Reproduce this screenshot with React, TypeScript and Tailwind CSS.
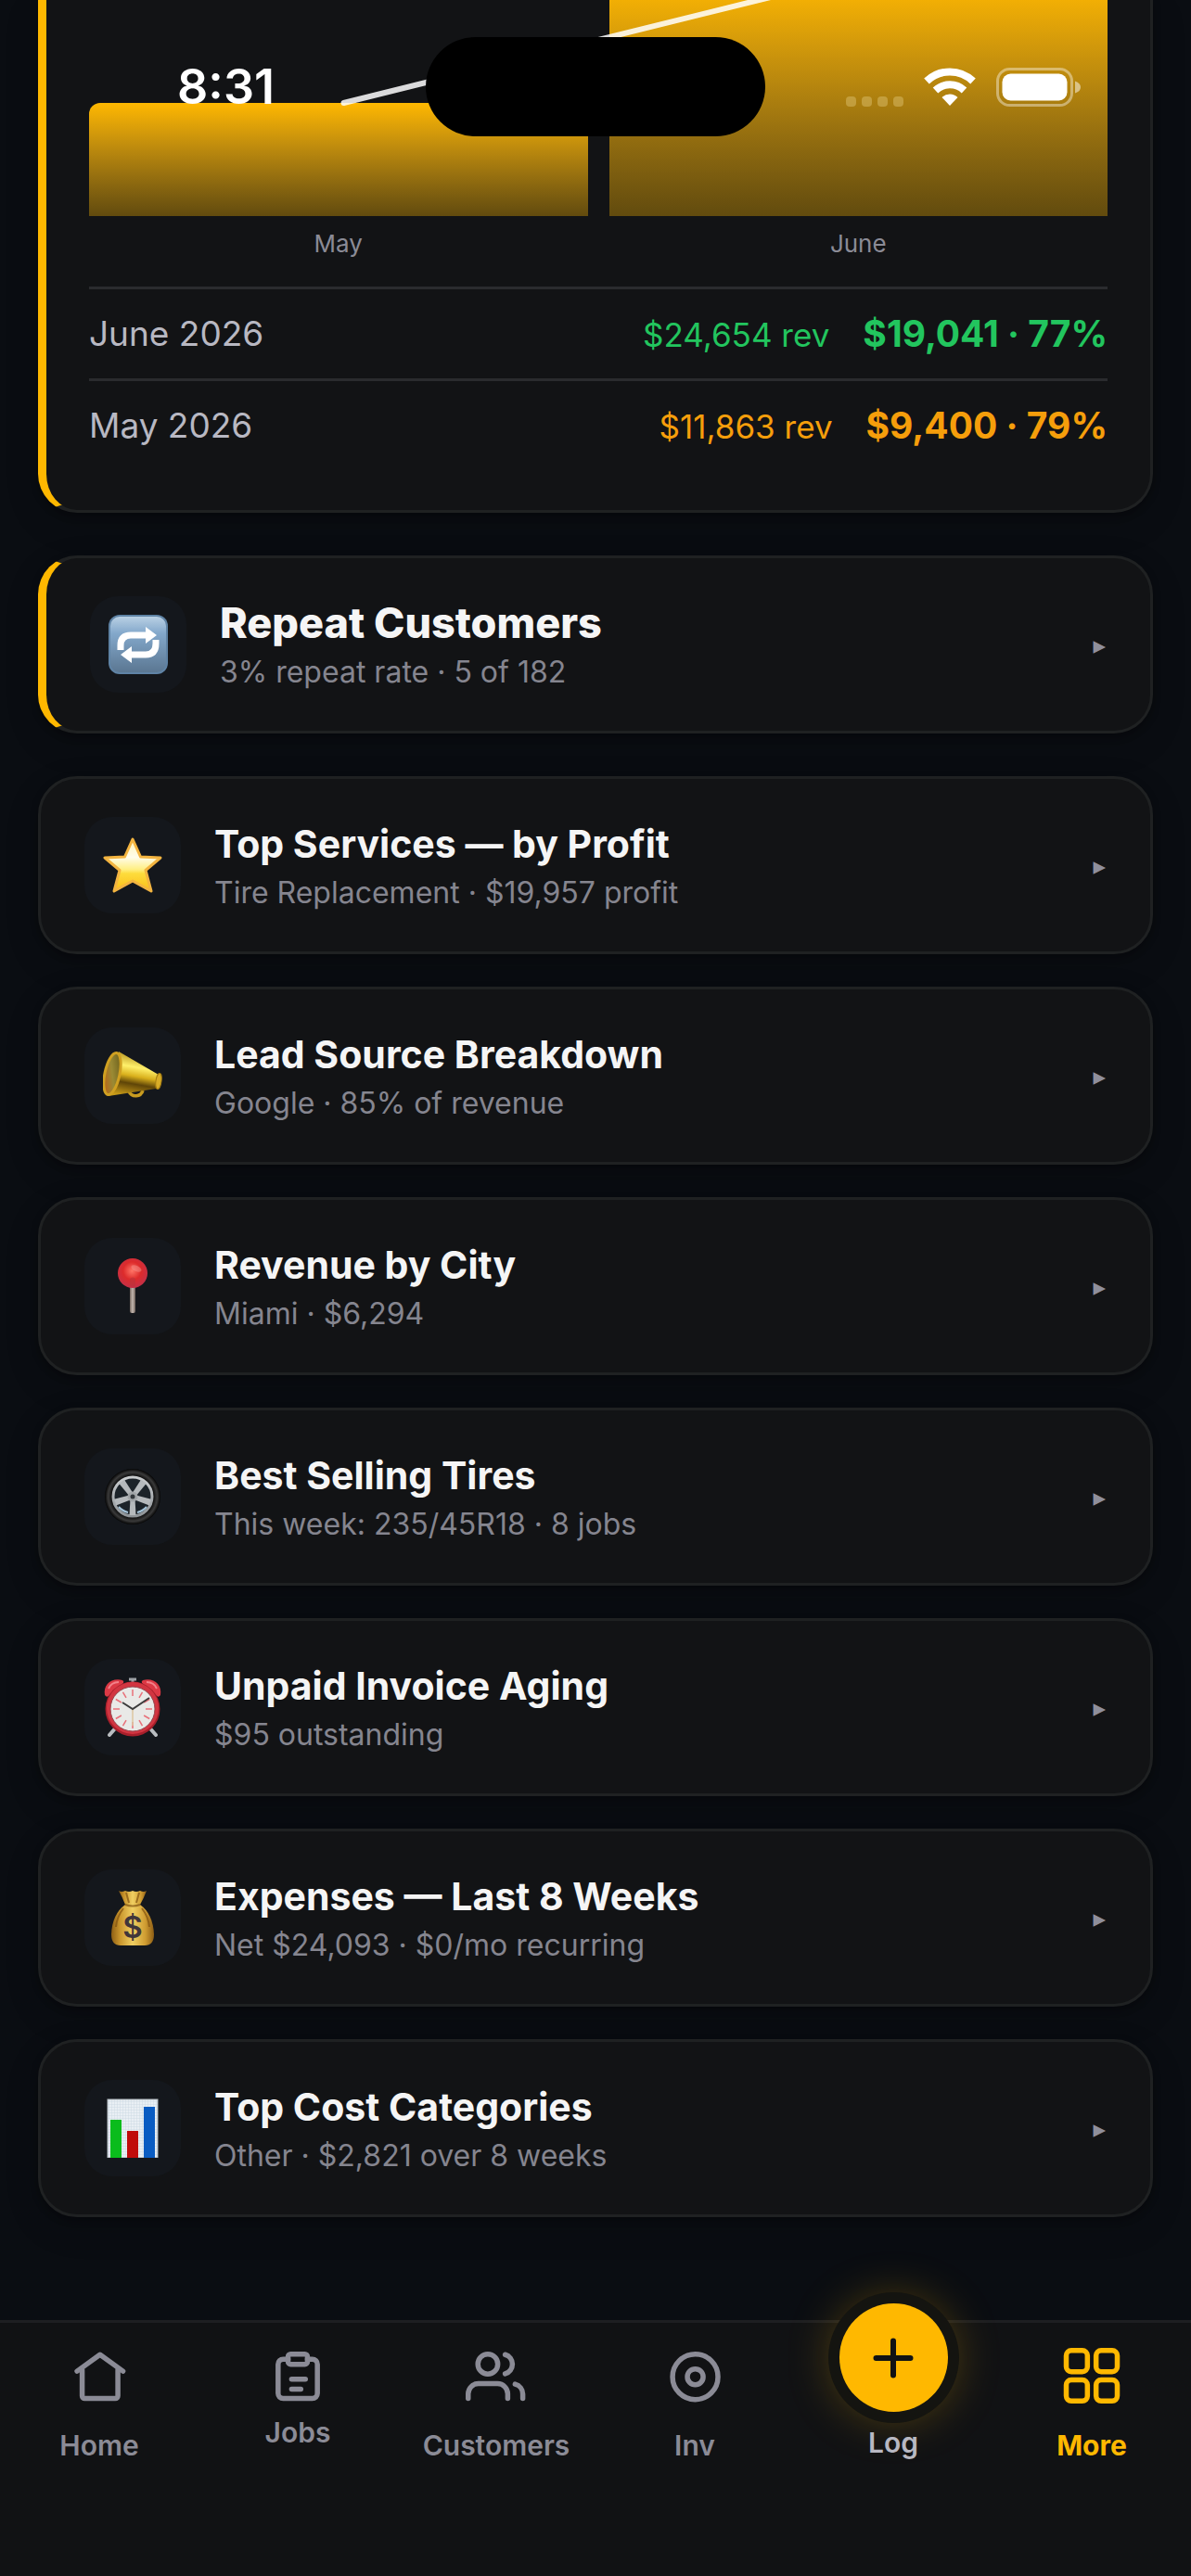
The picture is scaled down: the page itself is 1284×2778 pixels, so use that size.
import type { ReactNode } from "react";

type InsightCard = {
  title: string;
  subtitle: string;
  icon: ReactNode;
};

type NavItem = {
  label: string;
  icon: ReactNode;
  compact?: boolean;
  active?: boolean;
};

function RepeatIcon() {
  return (
    <svg viewBox="0 0 64 64" className="size-16" aria-hidden>
      <defs>
        <linearGradient id="repeat-bg" x1="0" y1="0" x2="0" y2="1">
          <stop offset="0" stopColor="#b9d0e4" />
          <stop offset="0.3" stopColor="#83a8cb" />
          <stop offset="1" stopColor="#5b7792" />
        </linearGradient>
      </defs>
      <rect width="64" height="64" rx="12" fill="#5f83a5" />
      <rect x="2" y="2" width="60" height="60" rx="10" fill="url(#repeat-bg)" />
      <path d="M13 38V33Q13 22 24 22H41" fill="none" stroke="#fff" strokeWidth="7" />
      <path d="M51 27V31Q51 43 40 43H24" fill="none" stroke="#fff" strokeWidth="7" />
      <path d="M40 13 52 22 40 31ZM25 34 13 43 25 52Z" fill="#fff" />
    </svg>
  );
}

function StarIcon() {
  return (
    <svg viewBox="0 0 64 64" className="size-16" aria-hidden>
      <defs>
        <linearGradient id="star-fill" x1="0" y1="0" x2="0" y2="1">
          <stop offset="0" stopColor="#fff3b8" />
          <stop offset="0.35" stopColor="#fffcea" />
          <stop offset="0.58" stopColor="#ffef83" />
          <stop offset="0.66" stopColor="#fddc3c" />
          <stop offset="1" stopColor="#fbbd18" />
        </linearGradient>
      </defs>
      <path
        d="M32 4 40.500 23 62 24 46 37.500 52 60 32 49 12 60 18 37.500 2 24 23.500 23Z"
        fill="url(#star-fill)"
        stroke="#f3b440"
        strokeWidth="3"
        strokeLinejoin="round"
      />
    </svg>
  );
}

function MegaphoneIcon() {
  return (
    <svg viewBox="0 0 64 64" className="size-16" aria-hidden>
      <defs>
        <linearGradient id="horn-fill" x1="0.6" y1="0" x2="0.4" y2="1">
          <stop offset="0" stopColor="#a8800f" />
          <stop offset="0.35" stopColor="#fff06a" />
          <stop offset="0.55" stopColor="#d9b01c" />
          <stop offset="0.72" stopColor="#5f4508" />
          <stop offset="1" stopColor="#c79a17" />
        </linearGradient>
        <linearGradient id="horn-mouth" x1="0" y1="1" x2="1" y2="0">
          <stop offset="0" stopColor="#c4550d" />
          <stop offset="0.5" stopColor="#9a8a34" />
          <stop offset="1" stopColor="#5f5315" />
        </linearGradient>
      </defs>
      <path d="M28 49a8 8 0 0 0 15-1" fill="none" stroke="#c99c20" strokeWidth="3.5" />
      <path d="M17 6 60 31Q61 39 57 46L6 54Z" fill="url(#horn-fill)" />
      <ellipse cx="60" cy="38" rx="3" ry="8.500" transform="rotate(8 60 38)" fill="#d9ad27" stroke="#a47c12" />
      <ellipse cx="10" cy="30" rx="8" ry="23" transform="rotate(12 10 30)" fill="url(#horn-mouth)" stroke="#d0a021" strokeWidth="3" />
    </svg>
  );
}

function PinIcon() {
  return (
    <svg viewBox="0 0 64 64" className="size-16" aria-hidden>
      <defs>
        <radialGradient id="pin-head" cx="0.48" cy="0.42" r="0.6">
          <stop offset="0" stopColor="#ff7466" />
          <stop offset="0.5" stopColor="#dd2b2b" />
          <stop offset="1" stopColor="#c2304a" />
        </radialGradient>
        <linearGradient id="pin-stem" x1="0" x2="1">
          <stop offset="0" stopColor="#75675f" />
          <stop offset="0.5" stopColor="#c4b8b0" />
          <stop offset="1" stopColor="#6a5c55" />
        </linearGradient>
      </defs>
      <rect x="29" y="28" width="6" height="33" rx="2" fill="url(#pin-stem)" />
      <circle cx="32" cy="18" r="16" fill="url(#pin-head)" />
      <ellipse cx="36" cy="13" rx="6" ry="3" transform="rotate(25 36 13)" fill="#f79a92" opacity="0.45" />
      <path d="M29 24q3-3 6 0v7q-3 3-6 0Z" fill="#b9333c" opacity="0.6" />
    </svg>
  );
}

function TireIcon() {
  return (
    <svg viewBox="0 0 64 64" className="size-16" aria-hidden>
      <defs>
        <radialGradient id="tire-rubber" cx="0.5" cy="0.5" r="0.5">
          <stop offset="0.75" stopColor="#0e0e0e" />
          <stop offset="0.88" stopColor="#3a3a3a" />
          <stop offset="1" stopColor="#040404" />
        </radialGradient>
        <linearGradient id="tire-rim" x1="0" y1="0" x2="0" y2="1">
          <stop offset="0" stopColor="#c9ccce" />
          <stop offset="1" stopColor="#8f9498" />
        </linearGradient>
      </defs>
      <circle cx="32" cy="32" r="30" fill="url(#tire-rubber)" />
      <circle cx="32" cy="32" r="21" fill="#1c2329" stroke="url(#tire-rim)" strokeWidth="3" />
      {[36, 108, 180, 252, 324].map((angle) => (
        <path
          key={angle}
          d="M29.500 30 28.500 12h7L34.500 30Z"
          transform={`rotate(${angle} 32 32)`}
          fill="#b5b9bc"
        />
      ))}
      <path d="M17 43a18.500 18.500 0 0 0 10 6M47 43a18.500 18.500 0 0 1-10 6" fill="none" stroke="#a5c3d8" strokeWidth="2" />
      <circle cx="32" cy="32" r="5.500" fill="#a1a5a8" />
      <circle cx="32" cy="32" r="2.500" fill="#33383c" />
    </svg>
  );
}

function AlarmIcon() {
  return (
    <svg viewBox="0 0 64 64" className="size-16" aria-hidden>
      <path d="M14 54 7 62M50 54l7 8" stroke="#b9bdc1" strokeWidth="4" strokeLinecap="round" />
      <path d="M28 2h8M32 2v5" stroke="#9da2a6" strokeWidth="3" />
      <path d="M2 19C0 8 9 0 21 3q2 1 1 3L6 20q-2 2-4-1Z" fill="#dc3945" />
      <path d="M62 19C64 8 55 0 43 3q-2 1-1 3l16 14q2 2 4-1Z" fill="#dc3945" />
      <path d="M6 12Q9 5 17 5M47 5q8 0 11 7" fill="none" stroke="#f2828a" strokeWidth="2" />
      <circle cx="32" cy="34" r="29.500" fill="#a81f2b" />
      <circle cx="32" cy="33" r="28" fill="#d23541" />
      <circle cx="32" cy="34" r="24" fill="#e9e9e7" stroke="#94424a" />
      {[0, 30, 60, 90, 120, 150, 180, 210, 240, 270, 300, 330].map((angle) => (
        <path key={angle} d="M32 13v7" transform={`rotate(${angle} 32 34)`} stroke="#e8707a" strokeWidth="1.5" />
      ))}
      <path d="M32 34v18" stroke="#dcc6a0" strokeWidth="1.5" />
      <path d="M21 27 32 34 50 22" fill="none" stroke="#3c3c3c" strokeWidth="2" />
    </svg>
  );
}

function MoneyBagIcon() {
  return (
    <svg viewBox="0 0 64 64" className="size-16" aria-hidden>
      <defs>
        <linearGradient id="bag-fill" x1="0" x2="1">
          <stop offset="0" stopColor="#8f5f14" />
          <stop offset="0.2" stopColor="#c9952c" />
          <stop offset="0.5" stopColor="#f0cf62" />
          <stop offset="0.8" stopColor="#cf9c31" />
          <stop offset="1" stopColor="#8d5d15" />
        </linearGradient>
      </defs>
      <path d="M17 3q3 2 7 0 4 2 8 0 4 2 8 0 4 2 7 0-3 8-7 15H24Q21 10 17 3Z" fill="url(#bag-fill)" />
      <path d="M24 18h16q14 10 15 32 0 12-10 12H19Q9 62 9 50 10 28 24 18Z" fill="url(#bag-fill)" />
      <path d="M24 18q8 3 16 0M25 5l3 11M39 5l-3 11M22 22q-7 9-8 20M42 22q7 9 8 20" fill="none" stroke="#80510f" strokeWidth="2" opacity="0.7" />
      <text x="32" y="54" textAnchor="middle" fontSize="33" fontWeight="600" fill="#40363a">
        $
      </text>
    </svg>
  );
}

function BarsIcon() {
  return (
    <svg viewBox="0 0 64 64" className="size-16" aria-hidden>
      <defs>
        <pattern id="graph-paper" width="3" height="3" patternUnits="userSpaceOnUse">
          <rect width="3" height="3" fill="#e9eff4" />
          <path d="M0 0H3M0 0V3" stroke="#c9d7e2" strokeWidth="0.8" />
        </pattern>
      </defs>
      <rect x="5" y="1" width="54" height="63" fill="url(#graph-paper)" stroke="#b0b7bd" />
      <rect x="8" y="23" width="12" height="41" fill="#0abc1c" />
      <rect x="26" y="35" width="12" height="29" fill="#c00b0b" />
      <rect x="44" y="9" width="12" height="55" fill="#0a5cc2" />
    </svg>
  );
}

const INSIGHT_CARDS: InsightCard[] = [
  { title: "Top Services — by Profit", subtitle: "Tire Replacement · $19,957 profit", icon: <StarIcon /> },
  { title: "Lead Source Breakdown", subtitle: "Google · 85% of revenue", icon: <MegaphoneIcon /> },
  { title: "Revenue by City", subtitle: "Miami · $6,294", icon: <PinIcon /> },
  { title: "Best Selling Tires", subtitle: "This week: 235/45R18 · 8 jobs", icon: <TireIcon /> },
  { title: "Unpaid Invoice Aging", subtitle: "$95 outstanding", icon: <AlarmIcon /> },
  { title: "Expenses — Last 8 Weeks", subtitle: "Net $24,093 · $0/mo recurring", icon: <MoneyBagIcon /> },
  { title: "Top Cost Categories", subtitle: "Other · $2,821 over 8 weeks", icon: <BarsIcon /> },
];

const MONTHS = [
  { label: "June 2026", revenue: "$24,654 rev", profit: "$19,041 · 77%", color: "text-[#22c55e]" },
  { label: "May 2026", revenue: "$11,863 rev", profit: "$9,400 · 79%", color: "text-[#f59e0b]" },
];

const CHART_BARS = [
  { label: "May", height: 122 },
  { label: "June", height: 253 },
];

function NavGlyph({ children }: { children: ReactNode }) {
  return (
    <svg
      viewBox="0 0 24 24"
      className="size-[66px]"
      fill="none"
      stroke="currentColor"
      strokeWidth="2"
      strokeLinecap="round"
      strokeLinejoin="round"
      aria-hidden
    >
      {children}
    </svg>
  );
}

const NAV_LEFT: NavItem[] = [
  {
    label: "Home",
    icon: (
      <NavGlyph>
        <path d="M3.300 9.500 12.300 3l9 6.500" />
        <path d="M5.300 9v10.200a1 1 0 0 0 1 1h12a1 1 0 0 0 1-1V9" />
      </NavGlyph>
    ),
  },
  {
    label: "Jobs",
    compact: true,
    icon: (
      <NavGlyph>
        <path d="M8.200 4.800H6.300a2 2 0 0 0-2 2v11.400a2 2 0 0 0 2 2h11.400a2 2 0 0 0 2-2V6.800a2 2 0 0 0-2-2h-1.900" />
        <rect x="8.200" y="2.800" width="7.600" height="4" rx="1" />
        <path d="M9.600 12.600h5.400M9.600 16.500h3.600" />
      </NavGlyph>
    ),
  },
  {
    label: "Customers",
    icon: (
      <NavGlyph>
        <circle cx="8.700" cy="6.700" r="3.900" />
        <path d="M1 20.200v-1.800a4 4 0 0 1 4-4h7.500a4 4 0 0 1 4 4v1.800" />
        <path d="M15.500 3a3.900 3.900 0 0 1 0 7.500M19.400 14.600a4 4 0 0 1 3 3.900v1.700" />
      </NavGlyph>
    ),
  },
  {
    label: "Inv",
    icon: (
      <NavGlyph>
        <circle cx="12.200" cy="11.700" r="8.900" />
        <circle cx="12.200" cy="11.700" r="3.100" />
      </NavGlyph>
    ),
  },
];

const NAV_MORE: NavItem = {
  label: "More",
  active: true,
  icon: (
    <NavGlyph>
      <rect x="2" y="1.400" width="8.300" height="8.300" rx="2" />
      <rect x="13.700" y="1.400" width="8.300" height="8.300" rx="2" />
      <rect x="2" y="12.900" width="8.300" height="8.300" rx="2" />
      <rect x="13.700" y="12.900" width="8.300" height="8.300" rx="2" />
    </NavGlyph>
  ),
};

function StatusBar() {
  return (
    <div className="absolute inset-x-0 top-0 z-20 grid h-[187px] grid-cols-[1fr_366px_1fr] items-center text-white">
      <time className="justify-self-center pl-7 text-[52px] font-semibold leading-none">8:31</time>
      <div className="h-[107px] rounded-full bg-black" />
      <div className="flex items-center justify-end gap-[22px] pr-[118px]">
        <div className="flex gap-[6px] self-end">
          {[0, 1, 2, 3].map((i) => (
            <span key={i} className="size-[11px] rounded-sm bg-[#d9bd6c]/50" />
          ))}
        </div>
        <svg viewBox="0 0 56 41" className="h-[41px] w-14" fill="none" aria-hidden>
          <path d="M3 14.500a36 36 0 0 1 50 0" stroke="#fff" strokeWidth="8" />
          <path d="M12.500 24.500a22.500 22.500 0 0 1 31 0" stroke="#fff" strokeWidth="8" />
          <path d="M28 41 19.500 32a12 12 0 0 1 17 0Z" fill="#fff" />
        </svg>
        <svg viewBox="0 0 92 42" className="h-[42px] w-[92px]" fill="none" aria-hidden>
          <rect x="1.500" y="1.500" width="80" height="39" rx="13" stroke="#fff" strokeOpacity="0.4" strokeWidth="3" />
          <rect x="6.500" y="6.500" width="70" height="29" rx="9" fill="#fff" />
          <path d="M85 14.500q6 2 6 6.500t-6 6.500Z" fill="#fff" fillOpacity="0.5" />
        </svg>
      </div>
    </div>
  );
}

function ProfitCard() {
  return (
    <section className="rounded-b-[42px] border-b-3 border-l-9 border-r-3 border-[#1f2122] border-l-[#ffb800] bg-[#121315] px-[46px] pb-[43px] shadow-[0_3px_9px_rgba(0,0,0,0.3),0_12px_36px_rgba(0,0,0,0.15)]">
      <div className="relative flex h-[233px] items-end gap-[23px]">
        {CHART_BARS.map((bar) => (
          <div
            key={bar.label}
            className="flex-1 rounded-t-xl bg-linear-to-b from-[#ffb800] to-[#624b0e]"
            style={{ height: bar.height }}
          />
        ))}
        <svg
          viewBox="0 0 100 262"
          preserveAspectRatio="none"
          className="absolute inset-x-0 bottom-0 h-[262px] w-full"
          aria-hidden
        >
          <path
            d="M25 140 75 4"
            fill="none"
            stroke="#fff"
            strokeOpacity="0.85"
            strokeWidth="6"
            strokeLinecap="round"
            vectorEffect="non-scaling-stroke"
          />
        </svg>
      </div>
      <div className="mb-[30px] mt-[14px] flex gap-[23px] text-[26px] leading-8 text-[#8b8b96]">
        {CHART_BARS.map((bar) => (
          <span key={bar.label} className="flex-1 text-center">
            {bar.label}
          </span>
        ))}
      </div>
      {MONTHS.map((month) => (
        <div key={month.label} className="flex h-[99px] items-center justify-between border-t-3 border-[#2a2b2e]">
          <span className="text-[37px] text-[#b8b8c2]">{month.label}</span>
          <span className={`flex items-baseline gap-9 ${month.color}`}>
            <span className="text-[35px]">{month.revenue}</span>
            <strong className="text-[39px] font-bold">{month.profit}</strong>
          </span>
        </div>
      ))}
    </section>
  );
}

function Card({ title, subtitle, icon, featured = false }: InsightCard & { featured?: boolean }) {
  return (
    <button
      type="button"
      className={`flex min-h-48 w-full items-center gap-9 rounded-[42px] border-3 border-[#1f2122] bg-[#121315] py-10 pl-[47px] pr-12 text-left shadow-[0_3px_9px_rgba(0,0,0,0.3),0_12px_36px_rgba(0,0,0,0.15)] ${
        featured ? "border-l-9 border-l-[#ffb800]" : ""
      }`}
    >
      <span className="flex size-26 shrink-0 items-center justify-center rounded-[30px] bg-[#14171c]">{icon}</span>
      <span className="min-w-0 flex-1">
        <span
          className={`block leading-[60px] text-[#f5f5f5] ${
            featured ? "text-[45px] font-extrabold" : "text-[41px] font-bold"
          }`}
        >
          {title}
        </span>
        <span className="block text-[32px] leading-[46px] text-[#85858f]">{subtitle}</span>
      </span>
      <span className="font-['DejaVu_Sans',sans-serif] text-[27px] leading-none text-[#8f8f9b]" aria-hidden>
        ▸
      </span>
    </button>
  );
}

function NavLink({ item }: { item: NavItem }) {
  return (
    <a
      href="#"
      aria-current={item.active ? "page" : undefined}
      className={`flex flex-col items-center ${item.compact ? "gap-[10px]" : "gap-6"} ${
        item.active ? "font-bold text-[#ffb800]" : "text-[#8b8b96]"
      }`}
    >
      {item.icon}
      <span>{item.label}</span>
    </a>
  );
}

export default function App() {
  return (
    <div className="relative flex min-h-screen flex-col overflow-hidden bg-[#0a0d12] font-[Inter,sans-serif]">
      <StatusBar />
      <main className="flex-1 px-[41px]">
        <ProfitCard />
        <div className="mt-[46px]">
          <Card title="Repeat Customers" subtitle="3% repeat rate · 5 of 182" icon={<RepeatIcon />} featured />
        </div>
        <div className="mt-[46px] flex flex-col gap-[35px]">
          {INSIGHT_CARDS.map((card) => (
            <Card key={card.title} {...card} />
          ))}
        </div>
      </main>

      <nav className="grid h-[276px] grid-cols-6 items-start border-t-3 border-[#1e1f22] bg-[#111214] pt-[26px] text-[30px] font-semibold leading-8">
        {NAV_LEFT.map((item) => (
          <NavLink key={item.label} item={item} />
        ))}
        <a href="#" className="-mt-[47px] flex flex-col items-center gap-[17px] text-[#b8b8c2]">
          <span className="flex size-[117px] items-center justify-center rounded-full bg-[#ffb800] text-[#111214] shadow-[0_0_0_12px_#141410,0_0_54px_rgba(255,184,0,0.4)]">
            <svg viewBox="0 0 44 44" className="size-11" fill="none" stroke="currentColor" strokeWidth="6" strokeLinecap="round" aria-hidden>
              <path d="M22 3.500v37M3.500 22h37" />
            </svg>
          </span>
          <span>Log</span>
        </a>
        <NavLink item={NAV_MORE} />
      </nav>
    </div>
  );
}
